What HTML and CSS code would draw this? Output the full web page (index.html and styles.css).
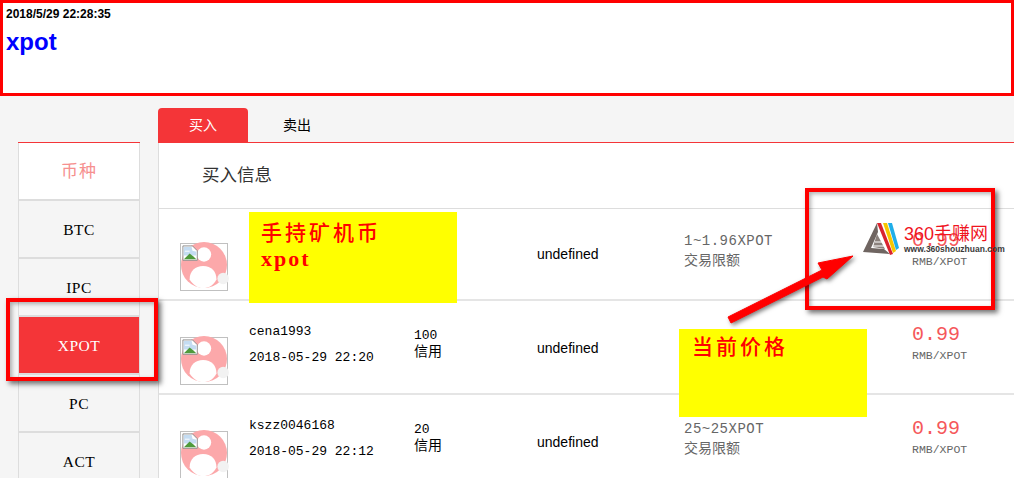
FILE: index.html
```html
<!DOCTYPE html>
<html lang="zh-CN">
<head>
  <meta charset="UTF-8">
  <title>xpot</title>
  <link rel="stylesheet" href="styles.css">
</head>
<body>
  <svg class="defs" width="0" height="0">
    <symbol id="avatar" viewBox="0 0 48 48" overflow="visible">
      <circle cx="24" cy="22" r="24" fill="#fca8aa"/>
      <circle cx="24" cy="11" r="7.5" fill="#fff"/>
      <path d="M9 37 C9 28 15 23 23 23 C32 23 37 29 37 37 C34 43 29 46 23 46 C17 46 12 42 9 37 Z" fill="#fff"/>
      <circle cx="44" cy="36" r="6" fill="#f2f2f2"/>
      <path d="M2 2 H12 L17 7 V17 H2 Z" fill="#fff" stroke="#8c8c8c"/>
      <path d="M3 3 H11 L12 7 L16 8 V12 H3 Z" fill="#c4dcf2"/>
      <path d="M3 16 L9 10 L13 13 L16 16 Z" fill="#4f9a3c"/>
      <path d="M4 7 H9 V8 H4 Z" fill="#fff"/>
    </symbol>
  </svg>

  <header class="ticker">
    <div class="ticker-time">2018/5/29 22:28:35</div>
    <div class="ticker-coin">xpot</div>
  </header>

  <div class="layout">
    <ul class="coins">
      <li class="coin coin-head">币种</li>
      <li class="coin">BTC</li>
      <li class="coin">IPC</li>
      <li class="coin active">XPOT</li>
      <li class="coin">PC</li>
      <li class="coin">ACT</li>
    </ul>

    <div class="market">
      <div class="tabs">
        <div class="tab active">买入</div>
        <div class="tab">卖出</div>
      </div>
      <div class="panel">
        <div class="panel-title">买入信息</div>

        <div class="row first">
          <svg class="avatar"><use href="#avatar"/></svg>
          <div class="user"></div>
          <div class="credit"></div>
          <div class="note">undefined</div>
          <div class="limit"><div class="limit-num">1~1.96XPOT</div><div>交易限额</div></div>
          <div class="price"><div class="price-num">0.99</div><div class="price-unit">RMB/XPOT</div></div>
        </div>

        <div class="row">
          <svg class="avatar"><use href="#avatar"/></svg>
          <div class="user"><div>cena1993</div><div>2018-05-29 22:20</div></div>
          <div class="credit"><div>100</div><div>信用</div></div>
          <div class="note">undefined</div>
          <div class="limit"><div class="limit-num">14~24XPOT</div><div>交易限额</div></div>
          <div class="price"><div class="price-num">0.99</div><div class="price-unit">RMB/XPOT</div></div>
        </div>

        <div class="row">
          <svg class="avatar"><use href="#avatar"/></svg>
          <div class="user"><div>kszz0046168</div><div>2018-05-29 22:12</div></div>
          <div class="credit"><div>20</div><div>信用</div></div>
          <div class="note">undefined</div>
          <div class="limit"><div class="limit-num">25~25XPOT</div><div>交易限额</div></div>
          <div class="price"><div class="price-num">0.99</div><div class="price-unit">RMB/XPOT</div></div>
        </div>
      </div>
    </div>
  </div>

  <!-- annotations pasted over the screenshot -->
  <div class="sticker sticker-coin">
    <div class="sticker-cn">手持矿机币</div>
    <div class="sticker-en">xpot</div>
  </div>
  <div class="sticker sticker-price">
    <div class="sticker-cn">当前价格</div>
  </div>
  <div class="frame frame-coin"></div>
  <div class="frame frame-price"></div>

  <svg class="arrow" width="150" height="90" viewBox="0 0 150 90">
    <path d="M10 71 L13 77 L105 31 L109 33 L135 10 L100 17 L104 24 Z" fill="#f00" stroke="#f00" stroke-width="1" stroke-linejoin="round"/>
  </svg>

  <div class="mark">
    <svg class="mark-logo" width="38" height="34" viewBox="0 0 38 34">
      <path d="M15 1 L1 30 L28 32 L22 27 L9 26 L16 10 Z" fill="#6f6561"/>
      <path d="M15 12 L23 27 L11 25 Z" fill="#8b817c"/>
      <path d="M13 20 H21 M11 24 H23" stroke="#fff" stroke-width="1"/>
      <path d="M15 1 H19 L31 32 L28 33 Z" fill="#d9232e"/>
      <path d="M21 1 H25 L34 29 L31 31 Z" fill="#f7c600"/>
      <path d="M26 1 H30 L37 26 L34 28 Z" fill="#1faee9"/>
    </svg>
    <div class="mark-text">
      <div class="mark-name">360手赚网</div>
      <div class="mark-url">www.360shouzhuan.com</div>
    </div>
  </div>
</body>
</html>
```

FILE: styles.css
```css
html, body {
  margin: 0;
  height: 478px;
  overflow: hidden;
}
body {
  position: relative;
  background: #f5f5f5;
  font-family: "Liberation Mono", "Noto Sans CJK SC", monospace;
  color: #000;
}
ul {
  list-style: none;
  margin: 0;
  padding: 0;
}
.defs {
  position: absolute;
}

.ticker {
  box-sizing: border-box;
  height: 96px;
  background: #fff;
  border: 3px solid #f00;
  padding: 4px 3px;
  font-family: "Liberation Sans", sans-serif;
  font-weight: bold;
}
.ticker-time {
  font-size: 12px;
  line-height: 14px;
}
.ticker-coin {
  margin-top: 7px;
  font-size: 24px;
  line-height: 28px;
  color: #00f;
}

.layout {
  display: flex;
  padding: 12px 0 0 18px;
}
.coins {
  width: 122px;
  flex: none;
  margin-top: 34px;
  margin-right: 18px;
  border-top: 1px solid #f43538;
}
.coin {
  box-sizing: border-box;
  height: 58px;
  border: 1px solid #ddd;
  border-width: 0 1px 2px;
  text-align: center;
  line-height: 58px;
  font-family: "Liberation Serif", "Noto Sans CJK SC", serif;
  font-size: 15.5px;
  letter-spacing: 0.5px;
}
.coin-head {
  background: #fff;
  color: #f6908f;
  font-size: 17px;
  letter-spacing: 1px;
}
.coin.active {
  background: #f43538;
  color: #fff;
  border-top: 0;
}

.market {
  flex: 1;
}
.tabs {
  display: flex;
  height: 34px;
  border-bottom: 1px solid #f43538;
}
.tab {
  width: 98px;
  text-align: center;
  line-height: 37px;
  font-size: 14px;
  border-radius: 4px 4px 0 0;
}
.tab.active {
  width: 90px;
  background: #f43538;
  color: #fff;
}
.panel {
  background: #fff;
  border-left: 1px solid #ddd;
}
.panel-title {
  height: 66px;
  box-sizing: border-box;
  border-bottom: 1px solid #ddd;
  padding-left: 43px;
  line-height: 67px;
  font-size: 17.5px;
  color: #333;
}
.row {
  box-sizing: border-box;
  height: 94px;
  display: grid;
  grid-template-columns: 69px 165px 123px 147px 228px 1fr;
  padding-left: 21px;
  border-bottom: 2px solid #e5e5e5;
}
.row.first {
  height: 92px;
}
.avatar {
  width: 46px;
  height: 46px;
  margin-top: 36px;
  border: 1px solid #c0c0c0;
  overflow: visible;
}
.row.first .avatar {
  margin-top: 34px;
}
.user {
  padding-top: 18px;
  font-size: 13px;
  line-height: 26px;
}
.credit {
  padding-top: 27px;
  font-size: 13px;
  line-height: 16px;
}
.credit div + div {
  font-size: 14px;
}
.note {
  padding-top: 38px;
  font-family: "Liberation Sans", sans-serif;
  font-size: 14px;
  line-height: 18px;
}
.limit {
  padding-top: 24px;
  font-size: 14px;
  line-height: 20px;
  color: #666;
}
.row.first .limit, .row.first .price, .row.first .note {
  margin-top: -2px;
}
.limit-num {
  letter-spacing: 0.5px;
}
.price {
  padding-top: 22px;
  color: #666;
}
.price-num {
  font-size: 20px;
  line-height: 24px;
  color: #f5585a;
}
.price-unit {
  font-size: 11.5px;
  line-height: 18px;
}

/* annotations */
.sticker {
  position: absolute;
  box-sizing: border-box;
  background: #ff0;
  color: #f00;
}
.sticker-coin {
  left: 249px;
  top: 212px;
  width: 208px;
  height: 91px;
  padding: 11px 12px;
}
.sticker-price {
  left: 679px;
  top: 329px;
  width: 188px;
  height: 88px;
  padding: 8px 13px;
}
.sticker-cn {
  font-size: 21px;
  line-height: 24px;
  letter-spacing: 3px;
  font-weight: 500;
}
.sticker-en {
  font-family: "Liberation Serif", serif;
  font-weight: bold;
  font-size: 22px;
  line-height: 23px;
  letter-spacing: 2px;
}
.frame {
  position: absolute;
  box-sizing: border-box;
  border: 4px solid #f00;
  box-shadow: 3px 3px 5px rgba(0, 0, 0, 0.55), inset 2px 2px 4px rgba(0, 0, 0, 0.3);
}
.frame-coin {
  left: 6px;
  top: 298px;
  width: 152px;
  height: 83px;
}
.frame-price {
  left: 805px;
  top: 188px;
  width: 190px;
  height: 122px;
}
.arrow {
  position: absolute;
  left: 718px;
  top: 246px;
  filter: drop-shadow(2px 2px 2px rgba(0, 0, 0, 0.5));
}
.mark {
  position: absolute;
  left: 862px;
  top: 222px;
  display: flex;
  gap: 4px;
}
.mark-text {
  font-family: "Liberation Sans", "Noto Sans CJK SC", sans-serif;
}
.mark-name {
  padding-top: 3px;
  font-size: 18px;
  line-height: 19px;
  color: #f0141e;
}
.mark-url {
  font-size: 8.5px;
  line-height: 11px;
  font-weight: bold;
  color: #3a3a3a;
  white-space: nowrap;
}
```
